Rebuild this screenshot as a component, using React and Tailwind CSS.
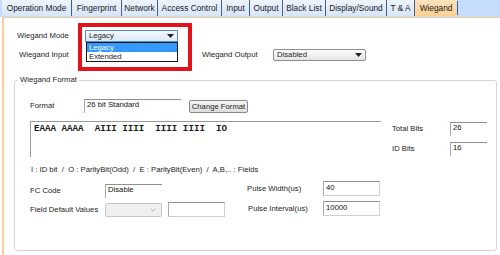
import { ChevronDown } from 'lucide-react'

const tabs = [
  { label: 'Operation Mode', w: 'w-[70px]' },
  { label: 'Fingerprint', w: 'w-[50px]' },
  { label: 'Network', w: 'w-[36px]' },
  { label: 'Access Control', w: 'w-[64px]' },
  { label: 'Input', w: 'w-[28px]' },
  { label: 'Output', w: 'w-[33px]' },
  { label: 'Black List', w: 'w-[43px]' },
  { label: 'Display/Sound', w: 'w-[61px]' },
  { label: 'T & A', w: 'w-[28px]' },
]

const Arrow = () => (
  <svg width="7" height="4" viewBox="0 0 7 4" className="shrink-0">
    <path d="M0 0h7L3.5 4z" fill="#222" />
  </svg>
)

// sunken edit box, top/left darker like a classic win32 textbox
const Sunken = ({ className = '', open = false, children }) => (
  <div
    className={`h-[14px] border-t border-l border-t-[#8f8f8f] border-l-[#a9a9a9] ${
      open ? 'border-r-0 border-b-0' : 'border-r border-b border-r-[#d0d0d0] border-b-[#d0d0d0]'
    } bg-white text-[7.7px] leading-[10px] pl-[2px] text-[#111] ${className}`}
  >
    {children}
  </div>
)

const App = () => {
  return (
    <div className="w-[500px] h-[255px] bg-white relative overflow-hidden text-[#1d1d1d] font-['Liberation_Sans',Arial,sans-serif]">
      {/* Tabs */}
      <div className="flex h-[17px] bg-[#c6dcfc] pl-[2px]">
        {tabs.map((t) => (
          <div
            key={t.label}
            className={`${t.w} h-[16px] bg-gradient-to-b from-[#eef4fc] to-[#d6e5f8] border-r border-[#44608a] text-[8.3px] leading-[16px] text-center text-[#1a1a1a] whitespace-nowrap`}
          >
            {t.label}
          </div>
        ))}
        <div className="w-[42px] h-[16px] bg-gradient-to-b from-[#fde3be] to-[#fbcf90] text-[8.3px] leading-[16px] text-center text-[#1a1a1a]">
          Wiegand
        </div>
        <div className="w-[1px] h-[14px] mt-[1px] bg-[#2b5cc4]" />
      </div>

      {/* Body */}
      <div className="h-[238px] border-t border-[#f6c993] border-l-[2px] border-l-[#f7cf9e] ml-[2px] text-[7.7px]">
        <div className="flex items-center h-[12px] mt-[12px]">
          <span className="ml-[13px] w-[68px]">Wiegand Mode</span>
          <div className="w-[93px] h-[12px] border border-[#5a8fc8] bg-gradient-to-b from-[#f4f9fe] to-[#dbe9f7] flex items-center justify-between px-[3px]">
            <span>Legacy</span>
            <Arrow />
          </div>
        </div>
        <div className="flex items-center h-[12px] mt-[7px]">
          <span className="ml-[15px] w-[183px]">Wiegand Input</span>
          <span className="w-[71px]">Wiegand Output</span>
          <div className="w-[93px] h-[12px] border border-[#8e8e8e] rounded-[2px] bg-gradient-to-b from-[#fbfbfb] to-[#e6e6e6] flex items-center justify-between px-[3px]">
            <span>Disabled</span>
            <Arrow />
          </div>
        </div>

        {/* Wiegand Format group */}
        <div className="relative ml-[10px] mt-[19px] w-[483px] h-[171px] border border-[#d5d5d5] rounded-[3px]">
          <span className="absolute -top-[6px] left-[3px] bg-white px-[2px] leading-[10px]">Wiegand Format</span>

          <div className="flex items-center mt-[18px] h-[14px]">
            <span className="ml-[15px] w-[54px]">Format</span>
            <Sunken open className="w-[97px]">26 bit Standard</Sunken>
            <div className="ml-[8px] w-[59px] h-[13px] border border-[#8a8a8a] rounded-[2px] bg-gradient-to-b from-[#f6f6f6] to-[#dedede] text-center leading-[11px]">
              Change Format
            </div>
          </div>

          <div className="flex mt-[8px]">
            <div className="ml-[15px] w-[351px] h-[36px] border-t border-l border-[#9a9a9a] font-['Liberation_Mono',monospace] font-bold text-[9.2px] leading-[10px] pl-[3px] pt-[2px] whitespace-pre">
              EAAA AAAA  AIII IIII  IIII IIII  IO
            </div>
            <div className="ml-[11px] flex flex-col gap-[6px] pt-[1px]">
              <div className="flex items-center">
                <span className="w-[58px]">Total Bits</span>
                <Sunken open className="w-[37px]">26</Sunken>
              </div>
              <div className="flex items-center">
                <span className="w-[58px]">ID Bits</span>
                <Sunken open className="w-[37px]">16</Sunken>
              </div>
            </div>
          </div>

          <div className="ml-[16px] mt-[8px] h-[10px] leading-[10px] whitespace-pre">
            I : ID bit  /  O : ParityBit(Odd)  /  E : ParityBit(Even)  /  A,B,.. : Fields
          </div>

          <div className="flex mt-[6px]">
            <div className="flex flex-col">
              <div className="flex items-center h-[14px] mt-[3px]">
                <span className="ml-[15px] w-[75px]">FC Code</span>
                <Sunken open className="w-[57px]">Disable</Sunken>
              </div>
              <div className="flex items-center h-[15px] mt-[4px]">
                <span className="ml-[15px] w-[75px]">Field Default Values</span>
                <div className="w-[57px] h-[14px] border border-[#c7c7c7] rounded-[2px] bg-[#f0f0f0] flex items-center justify-end pr-[4px]">
                  <ChevronDown size={8} className="text-[#b0b0b0]" strokeWidth={3} />
                </div>
                <Sunken className="ml-[6px] w-[57px] h-[15px]" />
              </div>
            </div>
            <div className="flex flex-col ml-[22px]">
              <div className="flex items-center h-[15px]">
                <span className="w-[76px]">Pulse Width(us)</span>
                <Sunken className="w-[57px] h-[15px] leading-[12px]">40</Sunken>
              </div>
              <div className="flex items-center h-[15px] mt-[5px]">
                <span className="w-[76px] pl-[1px]">Pulse Interval(us)</span>
                <Sunken className="w-[57px] h-[15px] leading-[12px]">10000</Sunken>
              </div>
            </div>
          </div>
        </div>
      </div>

      {/* Open dropdown list */}
      <div className="absolute left-[86px] top-[42px] w-[92px] h-[20px] border border-[#1a1a1a] bg-white text-[7.7px] leading-[9px]">
        <div className="bg-[#3399ff] text-white pl-[2px]">Legacy</div>
        <div className="pl-[2px]">Extended</div>
      </div>

      {/* Highlight box */}
      <div className="absolute left-[78px] top-[23px] w-[114px] h-[48px] border-[4px] border-[#e3131b]" />
    </div>
  )
}

export default App
